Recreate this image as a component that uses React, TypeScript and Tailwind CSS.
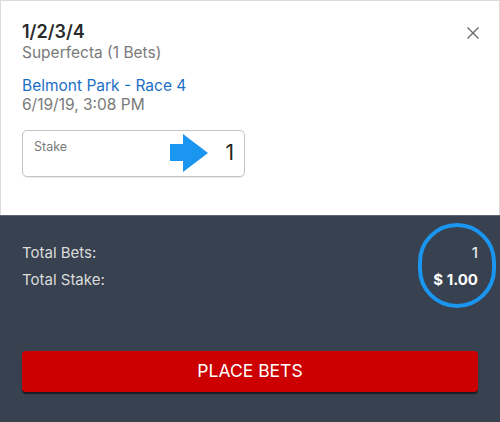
import React from "react";

function ArrowRight() {
  return (
    <svg width="40" height="40" viewBox="0 0 40 40" className="absolute left-[147px] top-[3px]">
      <polygon points="0,10 13,10 13,0 38,19 13,38 13,27 0,27" fill="#1a95f0" />
    </svg>
  );
}

export default function App() {
  return (
    <div className="w-[500px] h-[422px] flex flex-col font-['Inter',sans-serif]">
      <div className="relative h-[215px] bg-white border border-b-0 border-[#dcdcdc] pl-[21px] pt-[20px]">
        <button className="absolute right-[19px] top-[25px] text-[#666]">
          <svg width="14" height="14" viewBox="0 0 14 14">
            <path d="M1.5 1.5 L12.5 12.5 M12.5 1.5 L1.5 12.5" stroke="#6b6b6b" strokeWidth="1.4" />
          </svg>
        </button>
        <div className="text-[18px] leading-[22px] font-semibold text-[#2a2a2a]">1/2/3/4</div>
        <div className="text-[15.5px] leading-[20px] text-[#7a7a7a]">Superfecta (1 Bets)</div>
        <div className="mt-[13px] text-[15.5px] leading-[19px] text-[#1b6fc7]">Belmont Park - Race 4</div>
        <div className="text-[15.5px] leading-[19px] text-[#7a7a7a]">6/19/19, 3:08 PM</div>
        <div className="relative mt-[16px] w-[223px] h-[47px] border border-[#c4c4c4] rounded-[5px] shadow-[0_1px_1px_rgba(0,0,0,0.08)]">
          <div className="absolute left-[11px] top-[7px] text-[12.5px] text-[#7a7a7a]">Stake</div>
          <ArrowRight />
          <div className="absolute right-[10px] top-[10px] text-[21px] leading-[24px] text-[#222]">1</div>
        </div>
      </div>
      <div className="relative flex-1 bg-[#37414f] border-t border-[#5b6472] px-[22px]">
        <div className="relative mt-[27px] flex flex-col gap-[7px] text-[15px] leading-[20px]">
          <div className="flex justify-between">
            <span className="text-[#dcdcdc]">Total Bets:</span>
            <span className="text-[#e8e8e8] font-medium">1</span>
          </div>
          <div className="flex justify-between">
            <span className="text-[#dcdcdc]">Total Stake:</span>
            <span className="text-white font-bold text-[15px]">$ 1.00</span>
          </div>
          <div className="absolute -right-[18px] -top-[20px] w-[78px] h-[85px] rounded-full border-[4px] border-[#1a95f0]" />
        </div>
        <button className="mt-[61px] w-full h-[41px] rounded-[4px] bg-[#cc0000] text-white text-[17.5px] shadow-[0_2px_1px_rgba(0,0,0,0.55)]">
          PLACE BETS
        </button>
      </div>
    </div>
  );
}
